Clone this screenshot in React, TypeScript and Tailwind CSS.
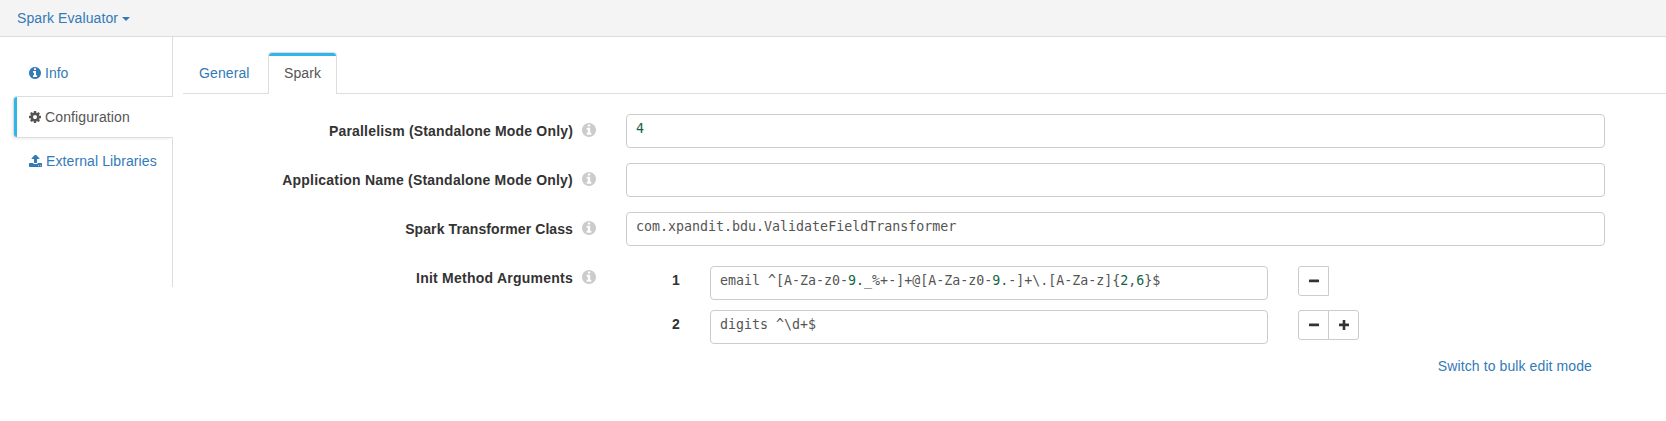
import type { ReactNode } from "react";

const COG =
  "M1152 896q0-106-75-181t-181-75-181 75-75 181 75 181 181 75 181-75 75-181zm512-109v222q0 12-8 23t-20 13l-185 28q-19 54-39 91 35 50 107 138 10 12 10 25t-9 23q-27 37-99 108t-94 71q-12 0-26-9l-138-108q-44 23-91 38-16 136-29 186-7 28-36 28h-222q-14 0-24.5-8.5t-11.5-21.5l-28-184q-49-16-90-37l-141 107q-10 9-25 9-14 0-25-11-126-114-165-168-7-10-7-23 0-12 8-23 15-21 51-66.5t54-70.5q-27-50-41-99l-183-27q-13-2-21-12.5t-8-23.5v-222q0-12 8-23t19-13l186-28q14-46 39-92-40-57-107-138-10-12-10-24 0-10 9-23 26-36 98.5-107.5t94.5-71.5q13 0 26 10l138 107q44-23 91-38 16-136 29-186 7-28 36-28h222q14 0 24.5 8.5t11.5 21.5l28 184q49 16 90 37l142-107q9-9 24-9 13 0 25 10 129 119 165 170 7 8 7 22 0 12-8 23-15 21-51 66.5t-54 70.5q26 50 41 98l183 28q13 2 21 12.5t8 23.5z";
const INFO =
  "M1152 1376v-160q0-14-9-23t-23-9h-96v-512q0-14-9-23t-23-9h-320q-14 0-23 9t-9 23v160q0 14 9 23t23 9h96v320h-96q-14 0-23 9t-9 23v160q0 14 9 23t23 9h448q14 0 23-9t9-23zm-128-896v-160q0-14-9-23t-23-9h-192q-14 0-23 9t-9 23v160q0 14 9 23t23 9h192q14 0 23-9t9-23zm640 416q0 209-103 385.5t-279.5 279.5-385.5 103-385.5-103-279.5-279.5-103-385.5 103-385.5 279.5-279.5 385.5-103 385.5 103 279.5 279.5 103 385.5z";
const UPLOAD =
  "M1344 1472q0-26-19-45t-45-19-45 19-19 45 19 45 45 19 45-19 19-45zm256 0q0-26-19-45t-45-19-45 19-19 45 19 45 45 19 45-19 19-45zm128-224v320q0 40-28 68t-68 28h-1472q-40 0-68-28t-28-68v-320q0-40 28-68t68-28h427q21 56 70.5 92t110.5 36h256q61 0 110.5-36t70.5-92h427q40 0 68 28t28 68zm-325-648q-17 40-59 40h-256v448q0 26-19 45t-45 19h-256q-26 0-45-19t-19-45v-448h-256q-42 0-59-40-17-39 14-69l448-448q18-19 45-19t45 19l448 448q31 30 14 69z";

function Icon({ d, box = "128 128 1536 1536", className }: { d: string; box?: string; className: string }) {
  return (
    <svg viewBox={box} className={`shrink-0 fill-current ${className}`} aria-hidden="true">
      <path d={d} />
    </svg>
  );
}

function Code({ children, className = "" }: { children?: ReactNode; className?: string }) {
  return (
    <div
      className={`h-[34px] rounded-[4px] border border-[#ccc] pl-[9px] pt-1 font-['DejaVu_Sans_Mono',monospace] text-[13.3px] leading-[19px] whitespace-pre text-[#555] ${className}`}
    >
      {children}
    </div>
  );
}

function Num({ children }: { children: string }) {
  return <span className="text-[#164]">{children}</span>;
}

function Label({ text, tracking }: { text: string; tracking: string }) {
  return (
    <div className="flex w-[413px] shrink-0 items-center justify-end gap-[9px] pt-[7px] leading-5">
      <span className={`font-bold text-[#333] ${tracking}`}>{text}</span>
      <Icon d={INFO} className="-mt-[2px] size-[14px] text-[#ccc]" />
    </div>
  );
}

function Field({ label, tracking, children }: { label: string; tracking: string; children?: ReactNode }) {
  return (
    <div className="flex items-start gap-[30px]">
      <Label text={label} tracking={tracking} />
      <Code className="w-[979px]">{children}</Code>
    </div>
  );
}

function Sign({ plus = false }: { plus?: boolean }) {
  return (
    <svg viewBox="0 0 10 10" className="mb-px size-[10px] fill-[#333]" aria-hidden="true">
      <rect x="0" y="3.6" width="10" height="2.6" rx="0.5" />
      {plus && <rect x="3.7" y="0" width="2.6" height="10" rx="0.5" />}
    </svg>
  );
}

function Argument({ index, last = false, children }: { index: string; last?: boolean; children: ReactNode }) {
  return (
    <div className="flex items-start">
      <span className="w-[84px] pl-[46px] pt-1 leading-5 font-bold text-[#333]">{index}</span>
      <Code className="w-[558px]">{children}</Code>
      <div className="ml-[30px] flex">
        <button className="flex h-[30px] w-[31px] items-center justify-center rounded-l-[3px] border border-[#ccc]">
          <Sign />
        </button>
        {last && (
          <button className="-ml-px flex h-[30px] w-[31px] items-center justify-center rounded-r-[3px] border border-[#ccc]">
            <Sign plus />
          </button>
        )}
      </div>
    </div>
  );
}

export default function App() {
  return (
    <div className="h-[421px] w-[1666px] overflow-hidden bg-white font-['Liberation_Sans',Arial,sans-serif] text-[14px] leading-5 text-[#337ab7]">
      <header className="flex h-[37px] items-start border-b border-[#ddd] bg-[#f4f4f4] pl-[17px] pt-2">
        <span className="tracking-[0.1px]">Spark Evaluator</span>
        <svg viewBox="0 0 8 4" className="mt-[9px] ml-1 h-1 w-2 fill-current" aria-hidden="true">
          <path d="M0 0h8L4 4z" />
        </svg>
      </header>
      <div className="flex items-start">
        <nav className="flex w-[173px] shrink-0 flex-col pl-[13px]">
          <div className="flex h-[59px] items-center gap-1 border-r border-[#ddd] pt-[13px] pl-4">
            <Icon d={INFO} className="size-3" />
            <span>Info</span>
          </div>
          <div className="flex h-[42px] items-center gap-1 rounded-l-[4px] border border-r-0 border-[#ddd] text-[#555] shadow-[-2px_2px_3px_-1px_rgba(0,0,0,0.08)]">
            <span className="h-10 w-[3px] rounded-l-[3px] bg-[#2eb6e8]" />
            <Icon d={COG} className="ml-2 size-3" />
            <span className="tracking-[0.12px]">Configuration</span>
          </div>
          <div className="flex h-[149px] items-start gap-1 border-r border-[#ddd] pt-[13px] pl-4">
            <Icon d={UPLOAD} box="64 128 1664 1536" className="mt-1 h-3 w-[13px]" />
            <span className="tracking-[0.1px]">External Libraries</span>
          </div>
        </nav>
        <main className="ml-[10px] flex w-[1483px] flex-col">
          <div className="flex h-[57px] items-end">
            <div className="h-[42px] w-[85px] border-b border-[#ddd] pt-[11px] pl-4 tracking-[0.1px]">General</div>
            <div className="flex h-[42px] w-[69px] flex-col rounded-t-[4px] border border-b-0 border-[#ddd] text-[#555]">
              <span className="h-[3px] rounded-t-[3px] bg-[#2eb6e8]" />
              <span className="pt-[7px] pl-[15px] tracking-[0.1px]">Spark</span>
            </div>
            <div className="h-px grow bg-[#ddd]" />
          </div>
          <form className="mt-5 flex flex-col gap-[15px]">
            <Field label="Parallelism (Standalone Mode Only)" tracking="tracking-[0.175px]">
              <Num>4</Num>
            </Field>
            <Field label="Application Name (Standalone Mode Only)" tracking="tracking-[0.215px]" />
            <Field label="Spark Transformer Class" tracking="tracking-[0.09px]">
              com.xpandit.bdu.ValidateFieldTransformer
            </Field>
            <div className="flex items-start gap-[30px]">
              <Label text="Init Method Arguments" tracking="tracking-[0.24px]" />
              <div className="flex flex-col gap-[10px] pt-[5px]">
                <Argument index="1">
                  email ^[A-Za-z0-<Num>9.</Num>_%+-]+@[A-Za-z0-<Num>9.</Num>-]+\.[A-Za-z]{"{"}
                  <Num>2</Num>,<Num>6</Num>
                  {"}$"}
                </Argument>
                <Argument index="2" last>{"digits ^\\d+$"}</Argument>
              </div>
            </div>
          </form>
          <a className="mt-3 self-end pr-[74px] tracking-[0.1px]">Switch to bulk edit mode</a>
        </main>
      </div>
    </div>
  );
}
